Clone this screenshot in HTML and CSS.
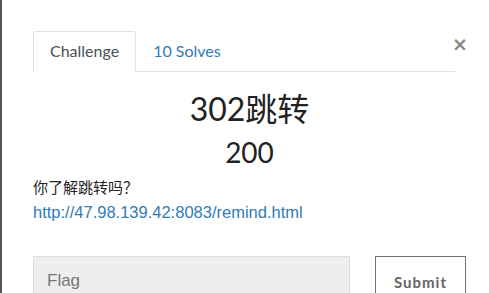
FILE: index.html
```html
<!DOCTYPE html>
<html>
<head>
<meta charset="utf-8">
<link rel="stylesheet" href="styles.css">
</head>
<body>
<div class="modal">
  <div class="tabs-row">
    <ul class="tabs">
      <li class="tab active">Challenge</li>
      <li class="tab">10 Solves</li>
    </ul>
    <span class="close">×</span>
  </div>
  <div class="content">
    <h2 class="title">302跳转</h2>
    <h3 class="points">200</h3>
    <p class="desc">你了解跳转吗？</p>
    <a class="link" href="#">http://47.98.139.42:8083/remind.html</a>
    <div class="form">
      <input class="flag" type="text" placeholder="Flag">
      <button class="submit">Submit</button>
    </div>
  </div>
</div>
</body>
</html>
```
FILE: styles.css
```css
html, body {
  margin: 0;
  padding: 0;
  background: #fff;
  overflow: hidden;
}
body {
  font-family: Lato, "Noto Sans CJK SC", sans-serif;
  color: #212529;
}
.modal {
  border-left: 2px solid #555;
  height: 293px;
  box-sizing: border-box;
  padding: 31px 0 0 31px;
}
.tabs-row {
  display: flex;
  align-items: flex-start;
  width: 422px;
  position: relative;
}
.tabs {
  list-style: none;
  margin: 0;
  padding: 0;
  display: flex;
  flex: 1;
  border-bottom: 1px solid #dee2e6;
}
.tab {
  font-size: 16px;
  line-height: 20px;
  padding: 9px 16px 10px 16px;
  color: #337ab7;
  border: 1px solid transparent;
  margin-bottom: -1px;
}
.tab.active {
  color: #495057;
  border-color: #dee2e6 #dee2e6 #fff;
  border-radius: 3px 3px 0 0;
  background: #fff;
}
.close {
  position: absolute;
  right: -13px;
  top: 2px;
  font-family: "DejaVu Sans", sans-serif;
  font-size: 19px;
  font-weight: bold;
  color: #888;
  line-height: 22px;
}
.content {
  width: 433px;
}
.title {
  margin: 17px 0 0 0;
  text-align: center;
  font-weight: 400;
  font-size: 32px;
  line-height: 40px;
  color: #222;
}
.points {
  margin: 6px 0 0 0;
  text-align: center;
  font-weight: 400;
  font-size: 28px;
  line-height: 34px;
  color: #222;
}
.desc {
  margin: 7px 0 0 0;
  font-size: 15px;
  line-height: 22px;
  color: #222;
}
.link {
  display: block;
  margin-top: 3px;
  font-family: "Liberation Sans", Arial, sans-serif;
  font-size: 16.5px;
  line-height: 22px;
  color: #337ab7;
  text-decoration: none;
}
.form {
  display: flex;
  margin-top: 33px;
  gap: 25px;
}
.flag {
  flex: none;
  width: 317px;
  height: 50px;
  box-sizing: border-box;
  background: #eee;
  border: 1px solid #ddd;
  padding: 0 13px;
  font-family: "Liberation Sans", Arial, sans-serif;
  font-size: 17px;
  color: #333;
  margin: 0;
  outline: none;
}
.flag::placeholder {
  color: #777;
}
.submit {
  flex: none;
  width: 91px;
  height: 50px;
  box-sizing: border-box;
  background: #fff;
  border: 1px solid #6c757d;
  font-family: Lato, sans-serif;
  font-weight: bold;
  font-size: 15px;
  letter-spacing: 1px;
  color: #666;
  margin: 0;
  padding: 2px 0 0 0;
}
```
